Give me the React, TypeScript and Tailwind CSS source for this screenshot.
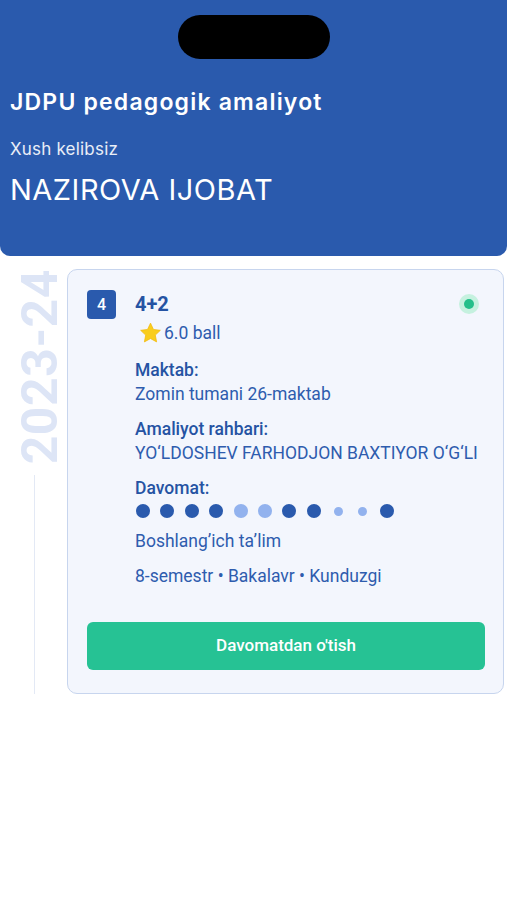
import React from "react";

const dots: ("on" | "half" | "small")[] = [
  "on", "on", "on", "on", "half", "half", "on", "on", "small", "small", "on",
];

function Star() {
  return (
    <svg width="23" height="22" viewBox="0 0 24 23" className="shrink-0">
      <path
        d="M12 1.2l3.1 6.6 7.2.9-5.3 5 1.4 7.1L12 17.3l-6.4 3.5L7 13.7l-5.3-5 7.2-.9z"
        fill="#f9cd1d"
        stroke="#f2b90c"
        strokeWidth="0.8"
        strokeLinejoin="round"
      />
    </svg>
  );
}

function Field({ label, value }: { label: string; value: string }) {
  return (
    <div className="flex flex-col">
      <span className="text-[17.5px] leading-[24px] font-medium text-[#2553a3]">{label}</span>
      <span className="text-[17.5px] leading-[24px] text-[#2e5cae]">{value}</span>
    </div>
  );
}

export default function App() {
  return (
    <div className="w-[507px] min-h-[900px] bg-white font-['Roboto',sans-serif]">
      {/* Header */}
      <div className="h-[256px] bg-[#2a5aad] rounded-b-[10px] flex flex-col px-[10px] font-['Inter',sans-serif] text-white">
        <div className="flex justify-center pt-[15px]">
          <div className="w-[152px] h-[44px] rounded-full bg-black" />
        </div>
        <h1 className="mt-[28px] text-[23px] leading-[30px] font-semibold tracking-[1.2px]">JDPU pedagogik amaliyot</h1>
        <p className="mt-[21px] text-[17px] leading-[22px] text-white/90 tracking-[0.2px]">Xush kelibsiz</p>
        <p className="mt-[12px] text-[29px] leading-[36px] font-normal tracking-[0.5px]">NAZIROVA IJOBAT</p>
      </div>

      {/* Body */}
      <div className="flex pt-[13px]">
        <div className="w-[67px] shrink-0 flex flex-col">
          <div className="pl-[19px] h-[200px] flex items-start">
            <span className="[writing-mode:vertical-rl] rotate-180 whitespace-nowrap text-[50px] leading-[42px] font-bold text-[#dde5f6] tracking-[0.5px]">
              2023-24
            </span>
          </div>
          <div className="ml-[34px] mt-[6px] w-px flex-1 bg-[#e3e9f5]" />
        </div>

        <div className="w-[437px] rounded-[10px] border border-[#c7d5ee] bg-[#f3f6fd] pl-[19px] pr-[18px] pt-[20px] pb-[23px]">
          <div className="flex items-start">
            <div className="w-[29px] h-[29px] rounded-[4px] bg-[#2a5aad] text-white flex items-center justify-center text-[16px] font-medium">
              4
            </div>
            <div className="ml-[19px] flex-1 flex flex-col">
              <div className="flex items-center justify-between">
                <span className="text-[20px] leading-[28px] font-bold text-[#2553a3]">4+2</span>
                <span className="w-[20px] h-[20px] rounded-full bg-[#c5f1df] flex items-center justify-center mr-[6px]">
                  <span className="w-[10px] h-[10px] rounded-full bg-[#24bf8a]" />
                </span>
              </div>
              <div className="flex items-center mt-[3px] ml-[4px] gap-[2px]">
                <Star />
                <span className="text-[17.5px] leading-[24px] text-[#2e5cae]">6.0 ball</span>
              </div>

              <div className="mt-[13px] flex flex-col gap-[11px]">
                <Field label="Maktab:" value="Zomin tumani 26-maktab" />
                <Field label="Amaliyot rahbari:" value="YO‘LDOSHEV FARHODJON BAXTIYOR O‘G‘LI" />
                <div className="flex flex-col">
                  <span className="text-[17.5px] leading-[24px] font-medium text-[#2553a3]">Davomat:</span>
                  <div className="flex items-center h-[22px] gap-[10.4px] ml-[1px]">
                    {dots.map((d, i) => (
                      <span key={i} className="w-[14px] flex justify-center">
                        {d === "on" && <span className="w-[14px] h-[14px] rounded-full bg-[#2a5aad]" />}
                        {d === "half" && <span className="w-[14px] h-[14px] rounded-full bg-[#92b2ee]" />}
                        {d === "small" && <span className="w-[9px] h-[9px] rounded-full bg-[#92b2ee]" />}
                      </span>
                    ))}
                  </div>
                  <span className="mt-[7px] text-[17.5px] leading-[24px] text-[#2e5cae]">Boshlang’ich ta’lim</span>
                </div>
                <span className="text-[17.5px] leading-[24px] text-[#2e5cae]">8-semestr • Bakalavr • Kunduzgi</span>
              </div>
            </div>
          </div>

          <button className="mt-[34px] w-full h-[48px] rounded-[6px] bg-[#26c294] text-white text-[17px] font-medium">
            Davomatdan o'tish
          </button>
        </div>
      </div>
    </div>
  );
}
